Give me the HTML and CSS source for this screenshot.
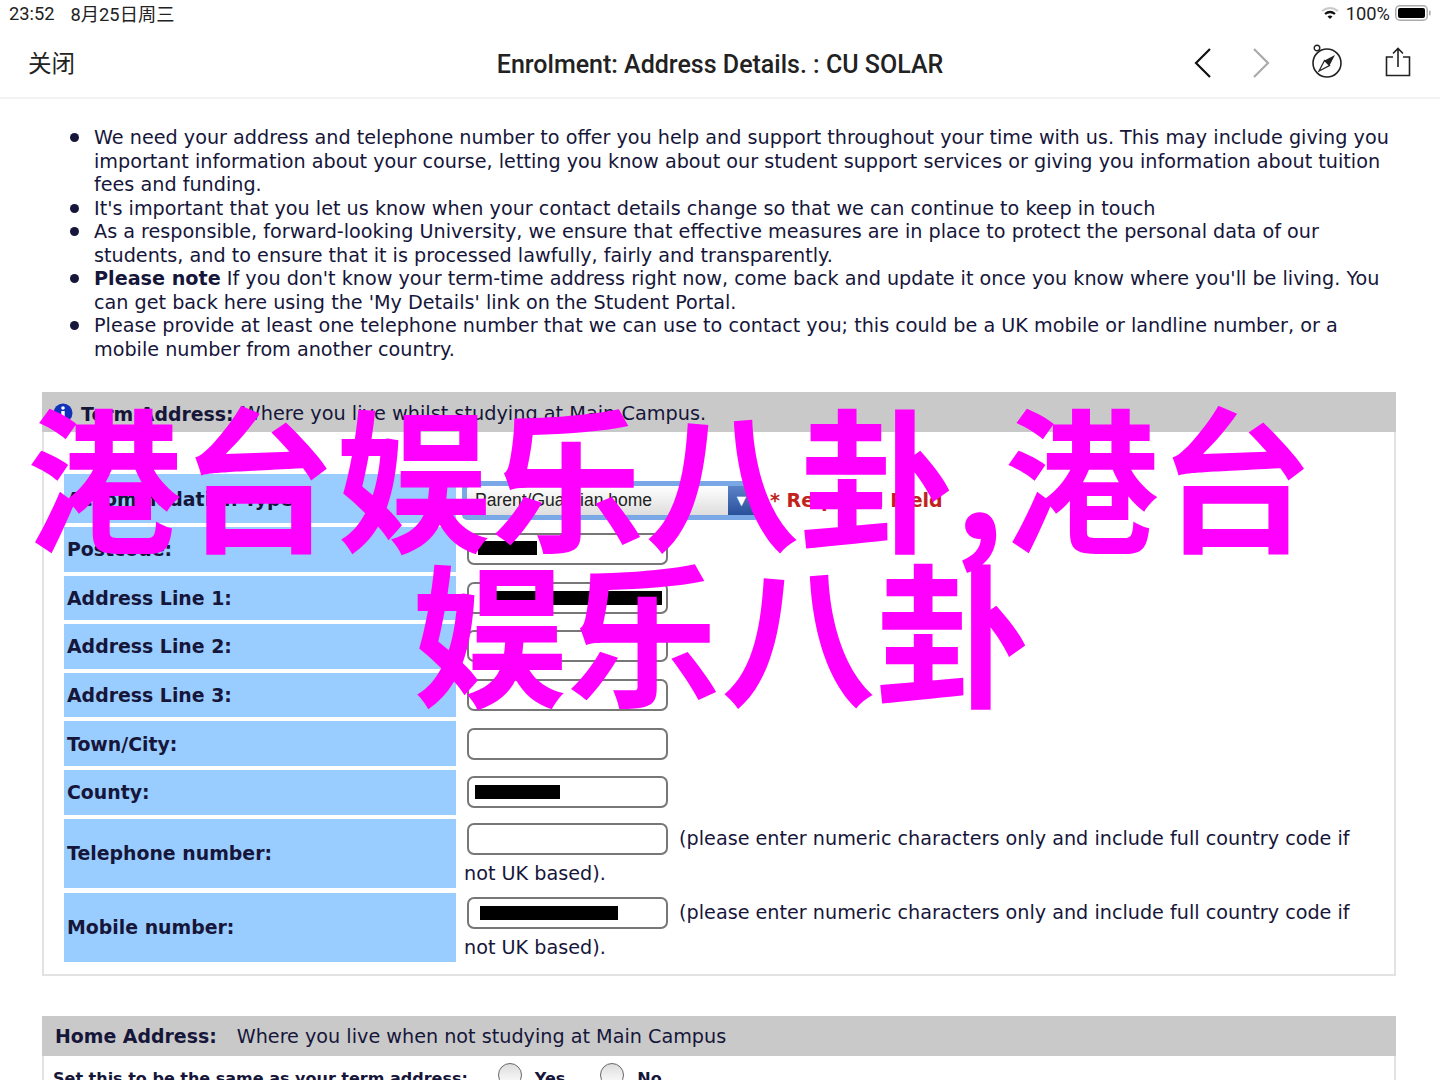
FILE: index.html
```html
<!DOCTYPE html>
<html lang="zh-CN">
<head>
  <meta charset="UTF-8">
  <meta name="viewport" content="width=device-width, initial-scale=1.0">
  <title>Enrolment: Address Details. : CU SOLAR</title>
  <link rel="stylesheet" href="styles.css">
</head>
<body>
  <div class="status">
    <span class="status-time">23:52</span>
    <span class="status-date">8月25日周三</span>
    <span class="status-right">
      <svg class="wifi" width="18" height="14" viewBox="0 0 18 14">
        <path d="M1 5 Q9 -1 17 5" fill="none" stroke="#c8c8c8" stroke-width="2"/>
        <path d="M4 8 Q9 4 14 8" fill="none" stroke="#111" stroke-width="2.2"/>
        <path d="M6.5 10.5 L9 13 L11.5 10.5 Q9 8.6 6.5 10.5 Z" fill="#111"/>
      </svg>
      <span>100%</span>
      <svg width="37" height="16" viewBox="0 0 37 16">
        <rect x="0.75" y="0.75" width="31.5" height="14.5" rx="4" fill="none" stroke="#aaa" stroke-width="1.5"/>
        <rect x="3" y="3" width="27" height="10" rx="2" fill="#000"/>
        <rect x="34" y="5.5" width="1.6" height="5" rx="0.8" fill="#aaa"/>
      </svg>
    </span>
  </div>

  <header class="nav">
    <span class="nav-close">关闭</span>
    <h1 class="nav-title">Enrolment: Address Details. : CU SOLAR</h1>
    <div class="nav-icons">
      <svg width="18" height="32" viewBox="0 0 18 32"><path d="M16 2 L2 16 L16 30" fill="none" stroke="#111" stroke-width="2.2"/></svg>
      <svg class="nav-next" width="18" height="32" viewBox="0 0 18 32"><path d="M2 2 L16 16 L2 30" fill="none" stroke="#aaa" stroke-width="2.2"/></svg>
      <svg class="nav-compass" width="32" height="34" viewBox="0 0 32 34">
        <circle cx="16" cy="19" r="14" fill="none" stroke="#222" stroke-width="1.6"/>
        <circle cx="6" cy="4" r="2.8" fill="#fff" stroke="#222" stroke-width="1.4"/>
        <path d="M24 11 L18.5 21.5 L13.5 16.5 Z" fill="#222"/>
        <path d="M8 27 L13.5 16.5 L18.5 21.5 Z" fill="none" stroke="#222" stroke-width="1.2"/>
      </svg>
      <svg class="nav-share" width="26" height="30" viewBox="0 0 26 30">
        <path d="M8 10 H1.5 V28.5 H24.5 V10 H18" fill="none" stroke="#222" stroke-width="1.6"/>
        <path d="M13 20 V2 M8 6.5 L13 1.5 L18 6.5" fill="none" stroke="#222" stroke-width="1.6"/>
      </svg>
    </div>
  </header>

  <main class="page">
    <ul class="notes">
      <li>We need your address and telephone number to offer you help and support throughout your time with us. This may include giving you important information about your course, letting you know about our student support services or giving you information about tuition fees and funding.</li>
      <li>It's important that you let us know when your contact details change so that we can continue to keep in touch</li>
      <li>As a responsible, forward-looking University, we ensure that effective measures are in place to protect the personal data of our students, and to ensure that it is processed lawfully, fairly and transparently.</li>
      <li><b>Please note</b> If you don't know your term-time address right now, come back and update it once you know where you'll be living. You can get back here using the 'My Details' link on the Student Portal.</li>
      <li>Please provide at least one telephone number that we can use to contact you; this could be a UK mobile or landline number, or a mobile number from another country.</li>
    </ul>

    <section class="panel">
      <div class="panel-head panel-head-term">
        <svg class="info" width="20" height="20" viewBox="0 0 20 20">
          <circle cx="10" cy="10" r="9.5" fill="#1133bb"/>
          <circle cx="10" cy="5" r="1.8" fill="#fff"/>
          <rect x="8.3" y="8" width="3.4" height="8" fill="#fff"/>
        </svg>
        <b>Term Address:</b>
        <span>Where you live whilst studying at Main Campus.</span>
      </div>
      <div class="rows">
        <div class="row row-first">
          <div class="label">Accommodation Type:</div>
          <div class="value">
            <span class="select-wrap">
              <span class="select">Parent/Guardian home<span class="select-arrow">▼</span></span>
            </span>
            <span class="required">* Required Field</span>
          </div>
        </div>
        <div class="row">
          <div class="label">Postcode:</div>
          <div class="value"><span class="field"><span class="redact redact-post"></span></span></div>
        </div>
        <div class="row">
          <div class="label">Address Line 1:</div>
          <div class="value"><span class="field"><span class="redact redact-addr"></span></span></div>
        </div>
        <div class="row">
          <div class="label">Address Line 2:</div>
          <div class="value"><span class="field"></span></div>
        </div>
        <div class="row">
          <div class="label">Address Line 3:</div>
          <div class="value"><span class="field"></span></div>
        </div>
        <div class="row">
          <div class="label">Town/City:</div>
          <div class="value"><span class="field"></span></div>
        </div>
        <div class="row">
          <div class="label">County:</div>
          <div class="value"><span class="field"><span class="redact redact-county"></span></span></div>
        </div>
        <div class="row row-tall">
          <div class="label">Telephone number:</div>
          <div class="value value-text"><span class="field"></span> (please enter numeric characters only and include full country code if not UK based).</div>
        </div>
        <div class="row row-tall">
          <div class="label">Mobile number:</div>
          <div class="value value-text"><span class="field"><span class="redact redact-mobile"></span></span> (please enter numeric characters only and include full country code if not UK based).</div>
        </div>
      </div>
    </section>

    <section class="panel panel-home">
      <div class="panel-head panel-head-home">
        <b>Home Address:</b>
        <span>Where you live when not studying at Main Campus</span>
      </div>
      <div class="same-row">
        <b>Set this to be the same as your term address:</b>
        <span class="radio"></span><b class="radio-yes">Yes</b>
        <span class="radio"></span><b>No</b>
      </div>
    </section>
  </main>

  <div class="stamp stamp-one">港台娱乐八卦,港台</div>
  <div class="stamp stamp-two">娱乐八卦</div>
</body>
</html>
```

FILE: styles.css
```css
html, body{
  margin: 0;
  height: 1080px;
  overflow: hidden;
}
body{
  position: relative;
  background: #fff;
  color: #16163a;
  font-family: "DejaVu Sans", "Noto Sans CJK SC", sans-serif;
}

/* status bar */
.status{
  display: flex;
  align-items: center;
  height: 26px;
  padding: 0 9px 2px;
  font-family: "Roboto", "Noto Sans CJK SC", sans-serif;
  font-size: 18.3px;
  color: #222;
}
.status-date{
  margin-left: 16px;
}
.status-right{
  margin-left: auto;
  display: flex;
  align-items: center;
  gap: 5px;
  margin-right: -1px;
}
.wifi{
  margin-right: 2px;
}

/* top bar */
.nav{
  display: grid;
  grid-template-columns: 1fr auto 1fr;
  align-items: center;
  height: 69px;
  padding: 0 28px;
  border-bottom: 2px solid #f2f2f2;
}
.nav-close{
  font-family: "Noto Sans CJK SC", sans-serif;
  font-size: 23.5px;
  color: #222;
  margin-top: -2px;
}
.nav-title{
  margin: 3px 0 0;
  font-family: "Roboto", sans-serif;
  font-size: 25px;
  font-weight: 500;
  color: #222;
}
.nav-icons{
  display: flex;
  align-items: center;
  justify-content: flex-end;
  margin-right: 1px;
}
.nav-next{
  margin-left: 40px;
}
.nav-compass{
  margin-left: 41px;
  margin-top: -4px;
}
.nav-share{
  margin-left: 42px;
  margin-top: -2px;
}

/* notes */
.page{
  padding: 0 44px 0 42px;
}
.notes{
  margin: 0;
  padding: 27px 4px 0 52px;
  font-size: 19.2px;
  line-height: 23.5px;
  height: 293px;
  box-sizing: border-box;
  list-style: none;
}
.notes li{
  position: relative;
}
.notes li::before{
  content: "";
  position: absolute;
  left: -24px;
  top: 7px;
  width: 9px;
  height: 9px;
  border-radius: 50%;
  background: #16163a;
}

/* panels */
.panel{
  border: 2px solid #e2e2e2;
  border-top: none;
  height: 584px;
  box-sizing: border-box;
  font-size: 19.2px;
}
.panel-head{
  display: flex;
  align-items: center;
  gap: 8px;
  height: 40px;
  margin: 0 -2px;
  padding-left: 11px;
  background: #c9c9c9;
}
.panel-head b,
.label{
  font-size: 18.9px;
  font-weight: bold;
}
.panel-head-term{
  padding-top: 3px;
  height: 37px;
}
.panel-head-term span{
  font-size: 19.3px;
}
.panel-head-home span{
  margin-left: -2px;
}
.info{
  flex: none;
  margin-top: -1px;
}
.rows{
  padding: 42px 0 0 20px;
}
.row{
  display: flex;
  height: 44.6px;
  margin-bottom: 4px;
}
.row-first{
  height: 49px;
}
.row-tall{
  height: 69px;
  margin-bottom: 5px;
}
.label{
  flex: none;
  display: flex;
  align-items: center;
  width: 392px;
  padding-left: 3px;
  box-sizing: border-box;
  background: #99ccff;
}
.value{
  padding-left: 8px;
  display: flex;
  align-items: center;
  min-width: 0;
}
.value-text{
  display: block;
  width: 892px;
  padding-top: 2px;
  line-height: 35px;
}

/* form controls */
.field{
  display: inline-flex;
  align-items: center;
  vertical-align: middle;
  width: 201px;
  height: 32px;
  margin: 0 5px 0 3px;
  box-sizing: border-box;
  background: #fff;
  border: 2px solid #777;
  border-radius: 7px;
}
.redact{
  display: block;
  height: 14px;
  background: #000;
}
.redact-post{
  width: 59px;
  margin: -3px 0 0 9px;
}
.redact-addr{
  width: 167px;
  margin-left: 26px;
}
.redact-county{
  width: 85px;
  margin-left: 6px;
}
.redact-mobile{
  width: 138px;
  margin-left: 11px;
}
.select-wrap{
  display: block;
  padding: 5px;
  margin: 4px 0 0 -2px;
  background: #7aa7e6;
  border-radius: 5px;
}
.select{
  display: flex;
  align-items: center;
  width: 288px;
  height: 29px;
  box-sizing: border-box;
  padding-left: 8px;
  background: linear-gradient(#fff, #ddd);
  border-radius: 4px;
  font-family: "Liberation Sans", sans-serif;
  font-size: 17.5px;
  color: #222;
}
.select-arrow{
  margin-left: auto;
  width: 27px;
  height: 29px;
  line-height: 29px;
  text-align: center;
  color: #fff;
  font-size: 16px;
  background: linear-gradient(#5c82c8, #29509a);
}
.required{
  margin: 2px 0 0 10px;
  color: #c0231c;
  font-weight: bold;
  font-size: 19px;
}

/* home address */
.panel-home{
  margin-top: 40px;
}
.panel-head-home{
  gap: 22px;
  padding-left: 13px;
}
.same-row{
  display: flex;
  align-items: center;
  height: 38px;
  padding-left: 9px;
  font-size: 16px;
}
.same-row b{
  margin-top: 6px;
}
.radio{
  width: 22px;
  height: 22px;
  margin: 0 13px 0 30px;
  border: 1px solid #666;
  border-radius: 50%;
  background: linear-gradient(#ddd, #fff);
}
.same-row .radio-yes{
  margin-right: 5px;
}

/* watermark over the page */
.stamp{
  position: absolute;
  color: #ff00ff;
  font-family: "Noto Sans CJK SC", sans-serif;
  font-weight: bold;
  font-size: 154.5px;
  line-height: 154.5px;
  white-space: nowrap;
}
.stamp-one{
  left: 27px;
  top: 396px;
}
.stamp-two{
  left: 412px;
  top: 551px;
}
```
